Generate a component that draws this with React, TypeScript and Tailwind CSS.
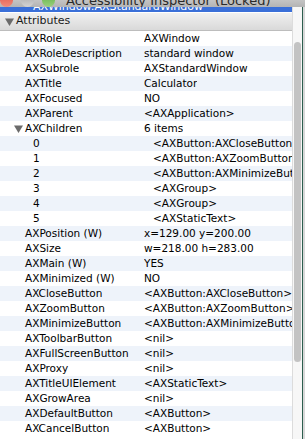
const font = { fontFamily: '"DejaVu Sans", "Liberation Sans", sans-serif' };

type Row = { key: string; value: string; child?: boolean; open?: boolean };

const rows: Row[] = [
  { key: 'AXRole', value: 'AXWindow' },
  { key: 'AXRoleDescription', value: 'standard window' },
  { key: 'AXSubrole', value: 'AXStandardWindow' },
  { key: 'AXTitle', value: 'Calculator' },
  { key: 'AXFocused', value: 'NO' },
  { key: 'AXParent', value: '<AXApplication>' },
  { key: 'AXChildren', value: '6 items', open: true },
  { key: '0', value: '<AXButton:AXCloseButton>', child: true },
  { key: '1', value: '<AXButton:AXZoomButton>', child: true },
  { key: '2', value: '<AXButton:AXMinimizeButton>', child: true },
  { key: '3', value: '<AXGroup>', child: true },
  { key: '4', value: '<AXGroup>', child: true },
  { key: '5', value: '<AXStaticText>', child: true },
  { key: 'AXPosition (W)', value: 'x=129.00 y=200.00' },
  { key: 'AXSize', value: 'w=218.00 h=283.00' },
  { key: 'AXMain (W)', value: 'YES' },
  { key: 'AXMinimized (W)', value: 'NO' },
  { key: 'AXCloseButton', value: '<AXButton:AXCloseButton>' },
  { key: 'AXZoomButton', value: '<AXButton:AXZoomButton>' },
  { key: 'AXMinimizeButton', value: '<AXButton:AXMinimizeButton>' },
  { key: 'AXToolbarButton', value: '<nil>' },
  { key: 'AXFullScreenButton', value: '<nil>' },
  { key: 'AXProxy', value: '<nil>' },
  { key: 'AXTitleUIElement', value: '<AXStaticText>' },
  { key: 'AXGrowArea', value: '<nil>' },
  { key: 'AXDefaultButton', value: '<AXButton>' },
  { key: 'AXCancelButton', value: '<AXButton>' },
];

function Triangle() {
  return (
    <svg className="h-[8px] w-[9px] flex-shrink-0" viewBox="0 0 9 8">
      <path d="M0 0.5 H9 L4.5 8 Z" fill="#6b6b6b" />
    </svg>
  );
}

export default function App() {
  return (
    <div className="h-[439px] w-[305px] overflow-hidden bg-[#e9e9e9] text-[10.5px] text-black" style={font}>
      {/* Title bar, mostly scrolled off the top */}
      <div className="relative h-[7px] w-full overflow-hidden bg-gradient-to-b from-[#c4c4c4] to-[#b4b4b4]">
        <div className="absolute left-0 top-[-6px] flex gap-[8px]">
          <span className="h-[13px] w-[13px] rounded-full bg-gradient-to-b from-[#e0574a] to-[#f08a7a]" />
          <span className="h-[13px] w-[13px] rounded-full bg-gradient-to-b from-[#a8a8a8] to-[#d4d4d4]" />
          <span className="h-[13px] w-[13px] rounded-full bg-gradient-to-b from-[#5fb244] to-[#9ad07e]" />
        </div>
        <div className="absolute left-[66px] top-[-9px] whitespace-nowrap text-[13px] text-[#2a2a2a]">
          Accessibility Inspector (Locked)
        </div>
      </div>

      <div className="flex h-[432px]">
        {/* Outline view */}
        <div className="flex w-[292px] flex-col bg-white">
          <div className="relative h-[5px] overflow-hidden bg-[#3a6fd8]">
            <div className="absolute left-[33px] top-[-8px] whitespace-nowrap text-[11px] text-white">
              AXWindow:AXStandardWindow
            </div>
          </div>
          <div className="h-px bg-white" />
          <div className="flex h-[18px] items-center gap-[2px] border-b border-[#bdbdbd] bg-gradient-to-b from-[#f0f0f0] to-[#d9d9d9] pl-[5px] text-[11px]">
            <Triangle />
            <span className="text-[#1a1a1a]">Attributes</span>
          </div>
          <div className="flex flex-col">
            {rows.map((r, i) => (
              <div
                key={i}
                className={`flex h-[15px] items-center whitespace-nowrap ${i % 2 === 1 ? 'bg-[#eef3fa]' : 'bg-white'}`}
              >
                <div className={`flex w-[144px] flex-shrink-0 items-center ${r.child ? 'pl-[33px]' : r.open ? 'pl-[14px]' : 'pl-[25px]'}`}>
                  {r.open && (
                    <span className="mr-[2px] flex">
                      <Triangle />
                    </span>
                  )}
                  <span>{r.key}</span>
                </div>
                <div className={`overflow-hidden ${r.child ? 'pl-[9px]' : ''}`}>{r.value}</div>
              </div>
            ))}
          </div>
        </div>

        {/* Vertical scroller */}
        <div className="flex w-[10px] flex-col border-l border-[#dcdcdc] bg-[#f7f7f7] pl-px">
          <div className="h-[35px]" />
          <div className="h-[320px] w-[7px] rounded-full bg-[#c3c3c3]" />
        </div>
        <div className="w-px bg-[#2c5e4e]" />
        <div className="flex-1 bg-[#d8d8d8]" />
      </div>
    </div>
  );
}
